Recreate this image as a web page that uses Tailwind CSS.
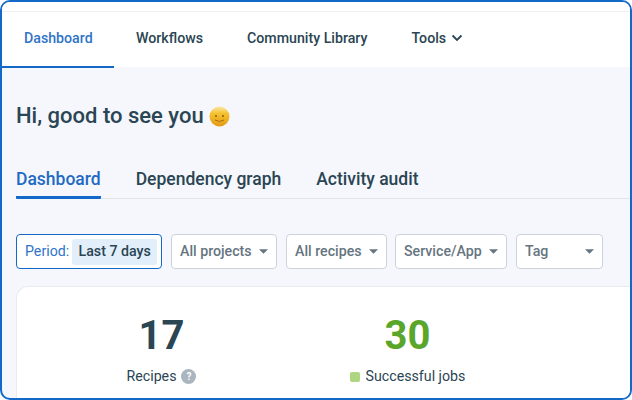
<!DOCTYPE html>
<html lang="en">
<head>
    <meta charset="UTF-8">
    <title>Dashboard</title>
    <script src="https://cdn.jsdelivr.net/npm/@tailwindcss/browser@4"></script>
</head>
<body class="bg-white">
    <div class="w-[632px] h-[400px] border-2 border-[#1269c7] rounded-[10px] overflow-hidden bg-[#f5f7fc] font-['Roboto',sans-serif] text-[#2a4553] flex flex-col">
        <!-- top nav -->
        <header class="bg-white h-[65px] shrink-0 pt-[9px]">
            <div class="border-t border-[#eef0f3] h-[56px] flex items-center text-[14.200px] font-medium">
                <a class="h-full flex items-center pb-[1px] px-[22px] text-[#2f74c8] border-b-2 border-[#1269c7] w-[112px] mt-px">Dashboard</a>
                <a class="px-[22px] pb-[2px]">Workflows</a>
                <a class="px-[22px] pb-[2px]">Community Library</a>
                <a class="px-[22px] pb-[2px] flex items-center gap-[5px]">Tools
                    <svg width="12" height="8" viewBox="0 0 12 8" fill="none" stroke="#2a4553" stroke-width="1.800"><path d="M1.500 1.500 6 6l4.500-4.500"/></svg>
                </a>
            </div>
        </header>

        <main class="flex-1 flex flex-col pl-[14px] min-h-0">
            <h1 class="mt-[35px] h-[28px] flex items-center gap-[5px] text-[22px] font-medium leading-none">Hi, good to see you
                <svg width="21" height="21" viewBox="0 0 21 21">
                    <defs><linearGradient id="face" x1="0" y1="0" x2="0" y2="1"><stop offset="0" stop-color="#fbe9a8"/><stop offset="0.35" stop-color="#f5c22f"/><stop offset="1" stop-color="#e59a14"/></linearGradient></defs>
                    <circle cx="10.500" cy="10.500" r="10" fill="url(#face)"/>
                    <circle cx="7" cy="10" r="1" fill="#8a5a12"/><circle cx="14" cy="10" r="1" fill="#8a5a12"/>
                    <path d="M6 14q4.500 3 9 0" fill="none" stroke="#a8700f" stroke-width="1"/>
                </svg>
            </h1>

            <nav class="mt-[33px] border-b border-[#e1e5ea] h-[36px] flex gap-[35px] text-[17.500px] font-medium">
                <a class="h-[36px] pt-[3px] text-[#1f6ac2] border-b-[3px] border-[#1269c7] rounded-b-[1px]">Dashboard</a>
                <a class="pt-[3px]">Dependency graph</a>
                <a class="pt-[3px]">Activity audit</a>
            </nav>

            <div class="mt-[35px] flex gap-[9px] text-[14.200px] font-medium text-[#66757f]">
                <div class="h-[35px] w-[146px] border border-[#1269c7] rounded-[4px] bg-white flex items-center pl-[8px] gap-[3px]">
                    <span class="font-normal text-[#2f74c8]">Period:</span>
                    <span class="h-[26px] w-[85px] rounded-[3px] bg-[#e3eefb] text-[#2a4553] flex items-center justify-center">Last 7 days</span>
                </div>
                <div class="h-[35px] w-[106px] border border-[#ccd3da] rounded-[4px] bg-white flex items-center justify-between px-[8px]">All projects
                    <svg width="9" height="5" viewBox="0 0 10 5" fill="#66757f"><path d="M0 0h10L5 5z"/></svg>
                </div>
                <div class="h-[35px] w-[101px] border border-[#ccd3da] rounded-[4px] bg-white flex items-center justify-between px-[8px]">All recipes
                    <svg width="9" height="5" viewBox="0 0 10 5" fill="#66757f"><path d="M0 0h10L5 5z"/></svg>
                </div>
                <div class="h-[35px] w-[112px] border border-[#ccd3da] rounded-[4px] bg-white flex items-center justify-between px-[8px] -ml-px">Service/App
                    <svg width="9" height="5" viewBox="0 0 10 5" fill="#66757f"><path d="M0 0h10L5 5z"/></svg>
                </div>
                <div class="h-[35px] w-[87px] border border-[#ccd3da] rounded-[4px] bg-white flex items-center justify-between px-[8px]">Tag
                    <svg width="9" height="5" viewBox="0 0 10 5" fill="#66757f"><path d="M0 0h10L5 5z"/></svg>
                </div>
            </div>

            <section class="mt-[17px] flex-1 bg-white border-t border-l border-[#e8ebf0] rounded-tl-[12px] flex">
                <div class="w-[289px] flex flex-col items-center pt-[22px]">
                    <div class="text-[40px] font-bold leading-[54px]">17</div>
                    <div class="mt-[3px] flex items-center gap-[5px] text-[14.200px]">Recipes
                        <span class="w-[15px] h-[15px] rounded-full bg-[#aab5bf] text-white text-[10px] font-bold flex items-center justify-center">?</span>
                    </div>
                </div>
                <div class="w-[203px] flex flex-col items-center pt-[22px]">
                    <div class="text-[40px] font-bold leading-[54px] text-[#5aa62b]">30</div>
                    <div class="mt-[3px] flex items-center gap-[6px] text-[14.200px]">
                        <span class="w-[10px] h-[10px] rounded-[2px] bg-[#aed581]"></span>Successful jobs
                    </div>
                </div>
            </section>
        </main>
    </div>
</body>
</html>
